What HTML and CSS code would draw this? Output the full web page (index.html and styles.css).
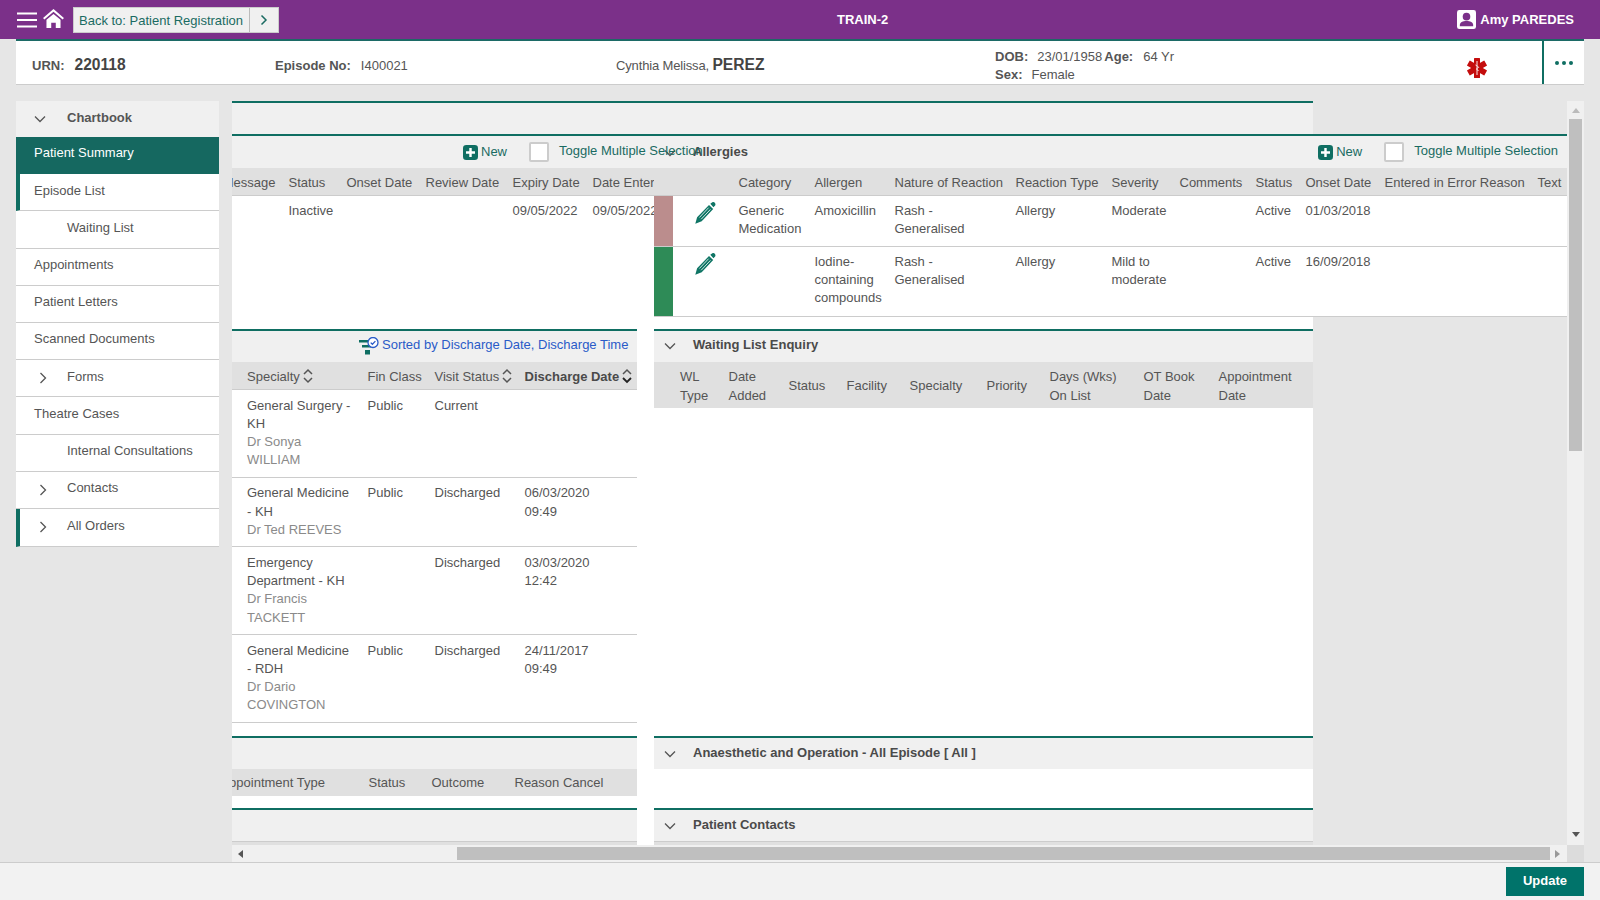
FILE: index.html
```html
<!DOCTYPE html>
<html>
<head>
    <meta charset="UTF-8">
    <title>Patient Summary</title>
    <link rel="stylesheet" href="styles.css">
</head>
<body>
    <header class="topbar">
        <div class="topbar-left">
            <svg class="icon-menu" viewBox="0 0 20 16"><path d="M0 1.500h20M0 8h20M0 14.500h20" stroke="#fff" stroke-width="2" fill="none"/></svg>
            <svg class="icon-home" viewBox="0 0 22 20"><path d="M11 0 0 9.600l1.400 1.500L11 2.900l9.600 8.200L22 9.600z" fill="#fff"/><path d="M3.600 11.400 11 5.200l7.400 6.200V20h-5v-5.600H8.600V20h-5z" fill="#fff"/></svg>
            <div class="back-btn">
                <span class="back-label">Back to: Patient Registration</span>
                <span class="back-arrow"><svg viewBox="0 0 8 12" class="chev-small"><path d="M1.500 1.500 6 6l-4.500 4.500" fill="none" stroke="#1a6b62" stroke-width="1.500"/></svg></span>
            </div>
        </div>
        <div class="topbar-title">TRAIN-2</div>
        <div class="topbar-user">
            <svg class="icon-user" viewBox="0 0 20 20"><rect width="20" height="20" rx="2.500" fill="#fff"/><circle cx="10" cy="7" r="4" fill="#7b3089"/><path d="M3 17v-1.500c0-2.500 3-4 7-4s7 1.500 7 4V17z" fill="#7b3089"/></svg>
            <span>Amy PAREDES</span>
        </div>
    </header>

    <section class="patient">
        <div class="pt-cell"><b class="pt-label urn-label">URN:</b><b class="pt-big">220118</b></div>
        <div class="pt-cell"><b class="pt-label ep-label">Episode No:</b><span>I400021</span></div>
        <div class="pt-cell"><span class="pt-name">Cynthia Melissa, </span><b class="pt-big">PEREZ</b></div>
        <div class="pt-demo">
            <div><b class="pt-label dob-label">DOB:</b><span class="dob-val">23/01/1958</span><b class="pt-label age-label">Age:</b><span>64 Yr</span></div>
            <div><b class="pt-label sex-label">Sex:</b><span>Female</span></div>
        </div>
        <div class="pt-alert">
            <svg class="icon-star" viewBox="0 0 20 20">
                <g fill="#c40d0d">
                    <rect x="7" y="0" width="6" height="20" rx="0.500"/>
                    <rect x="7" y="0" width="6" height="20" rx="0.500" transform="rotate(60 10 10)"/>
                    <rect x="7" y="0" width="6" height="20" rx="0.500" transform="rotate(120 10 10)"/>
                </g>
                <path d="M10 3v14M8.500 7c2 1 2 1.500 3 2s-2 1-2 2 2 1 2 2" fill="none" stroke="#fff" stroke-width="0.900"/>
            </svg>
        </div>
        <div class="pt-more"><i></i><i></i><i></i></div>
    </section>

    <div class="workspace">
        <nav class="sidebar">
            <div class="side-head"><svg class="chev" viewBox="0 0 12 8"><path d="M1 1.500 6 6.500l5-5" fill="none" stroke="#555" stroke-width="1.300"/></svg><span>Chartbook</span></div>
            <a class="side-item active">Patient Summary</a>
            <a class="side-item marked">Episode List</a>
            <a class="side-item sub">Waiting List</a>
            <a class="side-item">Appointments</a>
            <a class="side-item">Patient Letters</a>
            <a class="side-item">Scanned Documents</a>
            <a class="side-item sub"><svg class="chev-right" viewBox="0 0 8 12"><path d="M1.500 1 6.500 6l-5 5" fill="none" stroke="#555" stroke-width="1.300"/></svg>Forms</a>
            <a class="side-item">Theatre Cases</a>
            <a class="side-item sub">Internal Consultations</a>
            <a class="side-item sub"><svg class="chev-right" viewBox="0 0 8 12"><path d="M1.500 1 6.500 6l-5 5" fill="none" stroke="#555" stroke-width="1.300"/></svg>Contacts</a>
            <a class="side-item sub marked"><svg class="chev-right" viewBox="0 0 8 12"><path d="M1.500 1 6.500 6l-5 5" fill="none" stroke="#555" stroke-width="1.300"/></svg>All Orders</a>
        </nav>

        <div class="scrollpane">
            <div class="viewport">
                <div class="canvas">
                    <div class="panel-empty"></div>

                    <div class="row-wide">
                        <div class="wide-left">
                            <div class="toolbar toolbar-left">
                                <svg class="icon-new" viewBox="0 0 16 16"><rect width="16" height="16" rx="3.500" fill="#0f6e62"/><path d="M8 3.200v9.600M3.200 8h9.600" stroke="#fff" stroke-width="2.600"/></svg>
                                <span class="new-label">New</span>
                                <span class="checkbox"></span>
                                <span class="toggle-label">Toggle Multiple Selection</span>
                            </div>
                            <table class="grid grid-alerts">
                                <colgroup><col class="w50"><col class="w58"><col class="w79"><col class="w87"><col class="w80"><col class="w68"></colgroup>
                                <thead><tr><th class="clip-left">Message</th><th>Status</th><th>Onset Date</th><th>Review Date</th><th>Expiry Date</th><th class="clip">Date Entered</th></tr></thead>
                                <tbody>
                                    <tr><td></td><td>Inactive</td><td></td><td></td><td>09/05/2022</td><td class="clip">09/05/2022</td></tr>
                                </tbody>
                            </table>
                        </div>
                        <div class="wide-right">
                            <div class="toolbar toolbar-right">
                                <svg class="chev panel-chev" viewBox="0 0 12 8"><path d="M1 1.500 6 6.500l5-5" fill="none" stroke="#555" stroke-width="1.300"/></svg>
                                <span class="panel-title">Allergies</span>
                                <svg class="icon-new push" viewBox="0 0 16 16"><rect width="16" height="16" rx="3.500" fill="#0f6e62"/><path d="M8 3.200v9.600M3.200 8h9.600" stroke="#fff" stroke-width="2.600"/></svg>
                                <span class="new-label">New</span>
                                <span class="checkbox"></span>
                                <span class="toggle-label">Toggle Multiple Selection</span>
                            </div>
                            <table class="grid grid-allergy">
                                <colgroup><col class="w19"><col class="w59"><col class="w76"><col class="w80"><col class="w121"><col class="w96"><col class="w68"><col class="w76"><col class="w50"><col class="w79"><col class="w153"><col class="w36"></colgroup>
                                <thead><tr><th></th><th></th><th>Category</th><th>Allergen</th><th>Nature of Reaction</th><th>Reaction Type</th><th>Severity</th><th>Comments</th><th>Status</th><th>Onset Date</th><th>Entered in Error Reason</th><th>Text</th></tr></thead>
                                <tbody>
                                    <tr>
                                        <td class="sev sev-rose"></td>
                                        <td class="edit"><svg class="icon-pencil" viewBox="0 0 21 22"><path d="M15.300 1.800 17 .4c.9-.7 2-.5 2.800.4s.9 2.100.1 2.900l-1.500 1.500zM14 3l4.200 3.900L6.700 19.200.3 21.700l1.800-6.500z" fill="#0f7565"/><path d="M13.600 5.700 4.400 15.500M15.400 7.400l-9.200 9.800" stroke="#fff" stroke-width="0.800" fill="none"/></svg></td>
                                        <td>Generic<br>Medication</td><td>Amoxicillin</td><td>Rash -<br>Generalised</td><td>Allergy</td><td>Moderate</td><td></td><td>Active</td><td>01/03/2018</td><td></td><td></td>
                                    </tr>
                                    <tr>
                                        <td class="sev sev-green"></td>
                                        <td class="edit"><svg class="icon-pencil" viewBox="0 0 21 22"><path d="M15.300 1.800 17 .4c.9-.7 2-.5 2.800.4s.9 2.100.1 2.900l-1.500 1.500zM14 3l4.200 3.900L6.700 19.200.3 21.700l1.800-6.500z" fill="#0f7565"/><path d="M13.600 5.700 4.400 15.500M15.400 7.400l-9.200 9.800" stroke="#fff" stroke-width="0.800" fill="none"/></svg></td>
                                        <td></td><td>Iodine-<br>containing<br>compounds</td><td>Rash -<br>Generalised</td><td>Allergy</td><td>Mild to<br>moderate</td><td></td><td>Active</td><td>16/09/2018</td><td></td><td></td>
                                    </tr>
                                </tbody>
                            </table>
                        </div>
                    </div>

                    <div class="columns columns-first">
                        <div class="panel">
                            <div class="panel-head head-sorted">
                                <svg class="icon-sorted" viewBox="0 0 20 18"><path d="M0 3h12v2.500H0zM3 8h9v2.500H3zM6 13h5v4.500H6z" fill="#0f6e62"/><circle cx="14" cy="5.500" r="5" fill="#fff" stroke="#2a5bc8" stroke-width="1.300"/><path d="m11.700 5.600 1.700 1.700 3-3.200" fill="none" stroke="#2a5bc8" stroke-width="1.300"/></svg>
                                <span class="sorted-label">Sorted by Discharge Date, Discharge Time</span>
                            </div>
                            <table class="grid grid-episodes">
                                <colgroup><col class="w129"><col class="w67"><col class="w90"><col class="w119"></colgroup>
                                <thead><tr>
                                    <th>Specialty<svg class="icon-sort" viewBox="0 0 10 16"><path d="M1 6l4-4 4 4M1 10l4 4 4-4" fill="none" stroke="#555" stroke-width="1.500"/></svg></th>
                                    <th>Fin Class</th>
                                    <th>Visit Status<svg class="icon-sort" viewBox="0 0 10 16"><path d="M1 6l4-4 4 4M1 10l4 4 4-4" fill="none" stroke="#555" stroke-width="1.500"/></svg></th>
                                    <th><b>Discharge Date</b><svg class="icon-sort" viewBox="0 0 10 16"><path d="M1 6l4-4 4 4" fill="none" stroke="#555" stroke-width="1.500"/><path d="M1 10l4 4 4-4" fill="none" stroke="#222" stroke-width="1.800"/></svg></th>
                                </tr></thead>
                                <tbody>
                                    <tr><td>General Surgery -<br>KH<br><span class="muted">Dr Sonya<br>WILLIAM</span></td><td>Public</td><td>Current</td><td></td></tr>
                                    <tr><td>General Medicine<br>- KH<br><span class="muted">Dr Ted REEVES</span></td><td>Public</td><td>Discharged</td><td>06/03/2020<br>09:49</td></tr>
                                    <tr><td>Emergency<br>Department - KH<br><span class="muted">Dr Francis<br>TACKETT</span></td><td></td><td>Discharged</td><td>03/03/2020<br>12:42</td></tr>
                                    <tr><td>General Medicine<br>- RDH<br><span class="muted">Dr Dario<br>COVINGTON</span></td><td>Public</td><td>Discharged</td><td>24/11/2017<br>09:49</td></tr>
                                </tbody>
                            </table>
                        </div>
                        <div class="panel">
                            <div class="panel-head">
                                <svg class="chev panel-chev" viewBox="0 0 12 8"><path d="M1 1.500 6 6.500l5-5" fill="none" stroke="#555" stroke-width="1.300"/></svg>
                                <span class="panel-title">Waiting List Enquiry</span>
                            </div>
                            <table class="grid grid-waiting">
                                <colgroup><col class="w68"><col class="w60"><col class="w58"><col class="w63"><col class="w77"><col class="w63"><col class="w94"><col class="w75"><col class="w101"></colgroup>
                                <thead><tr><th>WL<br>Type</th><th>Date<br>Added</th><th>Status</th><th>Facility</th><th>Specialty</th><th>Priority</th><th>Days (Wks)<br>On List</th><th>OT Book<br>Date</th><th>Appointment<br>Date</th></tr></thead>
                            </table>
                        </div>
                    </div>

                    <div class="columns columns-second">
                        <div class="panel">
                            <div class="panel-head"></div>
                            <table class="grid grid-appts">
                                <colgroup><col class="w130"><col class="w63"><col class="w83"><col class="w129"></colgroup>
                                <thead><tr><th class="clip-left">Appointment Type</th><th>Status</th><th>Outcome</th><th>Reason Cancel</th></tr></thead>
                            </table>
                        </div>
                        <div class="panel">
                            <div class="panel-head">
                                <svg class="chev panel-chev" viewBox="0 0 12 8"><path d="M1 1.500 6 6.500l5-5" fill="none" stroke="#555" stroke-width="1.300"/></svg>
                                <span class="panel-title">Anaesthetic and Operation - All Episode [ All ]</span>
                            </div>
                        </div>
                    </div>

                    <div class="columns">
                        <div class="panel">
                            <div class="panel-head"></div>
                            <div class="stub-rule"></div>
                        </div>
                        <div class="panel">
                            <div class="panel-head">
                                <svg class="chev panel-chev" viewBox="0 0 12 8"><path d="M1 1.500 6 6.500l5-5" fill="none" stroke="#555" stroke-width="1.300"/></svg>
                                <span class="panel-title">Patient Contacts</span>
                            </div>
                            <div class="stub-rule"></div>
                        </div>
                    </div>
                </div>
            </div>
            <div class="vscroll">
                <span class="tri tri-up"></span>
                <div class="vtrack"><div class="vthumb"></div></div>
                <span class="tri tri-down"></span>
            </div>
            <div class="hscroll">
                <span class="tri tri-left"></span>
                <div class="htrack"><div class="hthumb"></div></div>
                <span class="tri tri-right"></span>
            </div>
            <div class="corner"></div>
        </div>
    </div>

    <footer class="footer">
        <button class="update-btn">Update</button>
    </footer>
</body>
</html>
```

FILE: styles.css
```css
* {
    box-sizing: border-box;
}

html, body {
    height: 100%;
}

body {
    margin: 0;
    height: 900px;
    display: flex;
    flex-direction: column;
    overflow: hidden;
    background-color: #e6e6e6;
    font-family: "Liberation Sans", Arial, sans-serif;
    font-size: 13px;
    line-height: 18.2px;
    color: #555;
}

svg {
    display: block;
    flex: none;
}

/* top bar */
.topbar {
    height: 39px;
    flex: none;
    display: flex;
    align-items: center;
    background-color: #7b3089;
    color: #fff;
    font-weight: 700;
}

.topbar-left {
    width: 837px;
    display: flex;
    align-items: center;
    padding-left: 17px;
}

.icon-menu {
    width: 20px;
    height: 16px;
}

.icon-home {
    width: 21px;
    height: 19px;
    margin-left: 6px;
    margin-bottom: 2px;
}

.back-btn {
    margin-left: 9px;
    height: 26px;
    display: flex;
    background-color: #f0f0f0;
    border: 1px solid #ccc;
    color: #1a6b62;
    font-weight: 400;
    line-height: 25px;
}

.back-label {
    width: 176px;
    padding-left: 5px;
    white-space: nowrap;
    border-right: 1px solid #bbb;
}

.back-arrow {
    width: 28px;
    display: flex;
    align-items: center;
    justify-content: center;
}

.chev-small {
    width: 8px;
    height: 12px;
}

.topbar-title {
    font-size: 13px;
    padding-top: 2px;
}

.topbar-user {
    margin-left: auto;
    padding-right: 26px;
    display: flex;
    align-items: center;
    gap: 4px;
}

.topbar-user span {
    padding-top: 2px;
}

.icon-user {
    width: 19px;
    height: 19px;
}

/* patient strip */
.patient {
    flex: none;
    height: 46px;
    margin: 0 16px;
    padding-left: 16px;
    display: grid;
    grid-template-columns: 243px 341px 379px 472px 75px 42px;
    align-items: center;
    background-color: #fff;
    border-top: 2px solid #1c6a66;
    border-bottom: 1px solid #ccc;
}

.pt-cell {
    padding-top: 7px;
}

.pt-label {
    color: #555;
}

.urn-label {
    margin-right: 10px;
}

.ep-label {
    margin-right: 10px;
}

.pt-big {
    font-size: 15.6px;
    color: #444;
}

.pt-name {
    letter-spacing: -0.15px;
}

.pt-demo {
    line-height: 18px;
    padding-top: 6px;
}

.dob-label {
    margin-right: 9px;
}

.dob-val {
    margin-right: 2px;
}

.age-label {
    margin-right: 10px;
}

.sex-label {
    margin-right: 9px;
}

.icon-star {
    width: 20px;
    height: 20px;
    margin-top: 11px;
}

.pt-more {
    height: 100%;
    border-left: 2px solid #0f6e62;
    display: flex;
    align-items: center;
    justify-content: center;
    gap: 3px;
}

.pt-more i {
    width: 4px;
    height: 4px;
    border-radius: 50%;
    background-color: #0f6e62;
}

/* workspace */
.workspace {
    flex: 1;
    min-height: 0;
    display: flex;
    gap: 13px;
    padding: 16px 16px 0;
}

.sidebar {
    width: 203px;
    flex: none;
    align-self: flex-start;
}

.side-head {
    height: 36px;
    display: flex;
    align-items: center;
    background-color: #f0f0f0;
    font-weight: 700;
    padding-left: 18px;
    padding-bottom: 2px;
}

.side-head .chev {
    margin-right: 21px;
    margin-top: 2px;
}

.chev {
    width: 12px;
    height: 8px;
}

.side-item {
    height: 37.2px;
    display: flex;
    align-items: center;
    padding: 0 0 3px 18px;
    background-color: #fff;
    border-bottom: 1px solid #ccc;
    position: relative;
}

.side-item:last-child {
    height: 38.5px;
    padding-bottom: 4px;
}

.side-item.active {
    background-color: #156860;
    color: #fff;
    border-bottom-color: #156860;
}

.side-item.marked {
    border-left: 4px solid #0f6e62;
    padding-left: 14px;
}

.side-item.sub {
    padding-left: 51px;
}

.side-item.sub.marked {
    padding-left: 47px;
}

.chev-right {
    width: 8px;
    height: 12px;
    position: absolute;
    left: 23px;
    top: 12px;
}

.side-item.marked .chev-right {
    left: 19px;
}

/* scroll pane */
.scrollpane {
    width: 1352px;
    flex: none;
    height: 761px;
    display: grid;
    grid-template-columns: 1335px 17px;
    grid-template-rows: 744px 17px;
}

.viewport {
    overflow: hidden;
}

.canvas {
    width: 1081px;
    min-height: 1000px;
    background-color: #fff;
}

.panel-empty {
    height: 33px;
    background-color: #f0f0f0;
    border-top: 2px solid #0f6e62;
}

.row-wide {
    width: 1335px;
    display: flex;
    border-top: 2px solid #0f6e62;
}

.wide-left {
    width: 422px;
    flex: none;
    background-color: #fff;
}

.wide-right {
    width: 913px;
    flex: none;
    background-color: #fff;
}

.toolbar {
    height: 32px;
    display: flex;
    align-items: center;
    background-color: #f0f0f0;
    white-space: nowrap;
}

.toolbar-left {
    padding-left: 231px;
    width: 422px;
    position: relative;
}

.toolbar-right {
    padding: 0 9px 0 10px;
}

.panel-title {
    font-weight: 700;
    color: #4a4a4a;
}

.toolbar-right .panel-title,
.panel-head .panel-title {
    margin-left: 17px;
}

.panel-chev {
    margin-top: 1px;
}

.push {
    margin-left: auto;
}

.icon-new {
    width: 15px;
    height: 15px;
}

.new-label {
    margin-left: 3px;
    color: #1a6b62;
}

.checkbox {
    width: 20px;
    height: 20px;
    flex: none;
    margin-left: 22px;
    background-color: #fff;
    border: 2px solid #ccc;
    border-radius: 2px;
}

.toggle-label {
    margin-left: 10px;
    margin-bottom: 2px;
    color: #1a6b62;
}

.columns {
    width: 1081px;
    display: grid;
    grid-template-columns: 405px 659px;
    gap: 17px;
}

.columns-first {
    margin-top: 12px;
    height: 407.5px;
}

.columns-second {
    height: 72px;
}

.panel {
    min-width: 0;
    border-top: 2px solid #0f6e62;
}

.panel-head {
    height: 31px;
    display: flex;
    align-items: center;
    padding-left: 10px;
    padding-bottom: 1px;
    background-color: #f0f0f0;
}

.head-sorted {
    padding-left: 127px;
}

.icon-sorted {
    width: 20px;
    height: 18px;
    margin-right: 3px;
    margin-top: 1px;
}

.sorted-label {
    color: #2a5bc8;
    white-space: nowrap;
}

.stub-rule {
    height: 10px;
    background-color: #e0e0e0;
    border-top: 1px solid #ccc;
}

/* tables */
.grid {
    width: 100%;
    table-layout: fixed;
    border-collapse: collapse;
}

.grid th {
    height: 27px;
    padding: 4px 6.5px 0;
    background-color: #e0e0e0;
    font-weight: 400;
    text-align: left;
    vertical-align: middle;
    white-space: nowrap;
    border-bottom: 1px solid #ccc;
}

.grid td {
    padding: 6.5px 6.5px 7.5px;
    vertical-align: top;
    white-space: nowrap;
    border-bottom: 1px solid #ccc;
}

.grid-episodes th {
    height: 28px;
}

.grid-waiting th {
    height: 46px;
    border-bottom: none;
}

.grid-appts th {
    padding-top: 2px;
    border-bottom: none;
}

.grid-waiting th:first-child {
    padding-left: 26px;
}

.grid-episodes th:first-child,
.grid-episodes td:first-child {
    padding-left: 15px;
}

.grid-alerts {
    width: 422px;
}

.grid-alerts td {
    padding-top: 6px;
    border-bottom: none;
    height: 50px;
}

.grid-allergy td {
    padding-top: 6px;
    padding-bottom: 8px;
}

.grid b {
    color: #4a4a4a;
}

.clip {
    overflow: hidden;
}

.grid .clip {
    padding-right: 0;
}

.grid .clip-left {
    overflow: hidden;
    direction: rtl;
    padding-left: 0;
}

.grid-appts .clip-left {
    padding-right: 37px;
}

.muted {
    color: #8a8a8a;
}

.grid .sev {
    padding: 0;
}

.sev-rose {
    background-color: #bb8d8d;
}

.sev-green {
    background-color: #2e8b57;
}

.grid .edit {
    padding: 6px 0 0 22px;
}

.icon-pencil {
    width: 21px;
    height: 22px;
}

.icon-sort {
    display: inline-block;
    width: 10px;
    height: 16px;
    margin-left: 3px;
    vertical-align: -3px;
}

.w19 { width: 19px; }
.w36 { width: 36px; }
.w50 { width: 50px; }
.w58 { width: 58px; }
.w59 { width: 59px; }
.w60 { width: 60px; }
.w63 { width: 63px; }
.w67 { width: 67px; }
.w68 { width: 68px; }
.w75 { width: 75px; }
.w76 { width: 76px; }
.w77 { width: 77px; }
.w79 { width: 79px; }
.w80 { width: 80px; }
.w83 { width: 83px; }
.w87 { width: 87px; }
.w90 { width: 90px; }
.w94 { width: 94px; }
.w96 { width: 96px; }
.w101 { width: 101px; }
.w119 { width: 119px; }
.w121 { width: 121px; }
.w129 { width: 129px; }
.w130 { width: 130px; }
.w153 { width: 153px; }

/* scrollbars */
.vscroll {
    background-color: #f0f0f0;
    display: flex;
    flex-direction: column;
    align-items: center;
    padding: 7px 0 8px;
}

.vtrack {
    flex: 1;
    width: 100%;
    padding: 6px 2px 0;
}

.vthumb {
    height: 332px;
    background-color: #bfbfbf;
}

.hscroll {
    background-color: #f0f0f0;
    display: flex;
    align-items: center;
    padding: 0 7px 0 6px;
}

.htrack {
    flex: 1;
    height: 13px;
    padding: 0 5px 0 214px;
}

.hthumb {
    height: 13px;
    background-color: #bfbfbf;
}

.corner {
    background-color: #dcdcdc;
}

.tri {
    width: 0;
    height: 0;
    flex: none;
    border-style: solid;
}

.tri-up {
    border-width: 0 4px 5px;
    border-color: transparent transparent #bbb;
}

.tri-down {
    border-width: 5px 4px 0;
    border-color: #555 transparent transparent;
}

.tri-left {
    border-width: 4px 5px 4px 0;
    border-color: transparent #555 transparent transparent;
}

.tri-right {
    border-width: 4px 0 4px 5px;
    border-color: transparent transparent transparent #999;
}

/* footer */
.footer {
    flex: none;
    height: 38px;
    display: flex;
    justify-content: flex-end;
    padding: 4px 16px 0;
    background-color: #f2f2f2;
    border-top: 1px solid #ccc;
}

.update-btn {
    width: 78px;
    height: 29px;
    border: none;
    padding-bottom: 4px;
    background-color: #00736a;
    color: #fff;
    font-family: inherit;
    font-size: 13px;
    font-weight: 700;
}
```
